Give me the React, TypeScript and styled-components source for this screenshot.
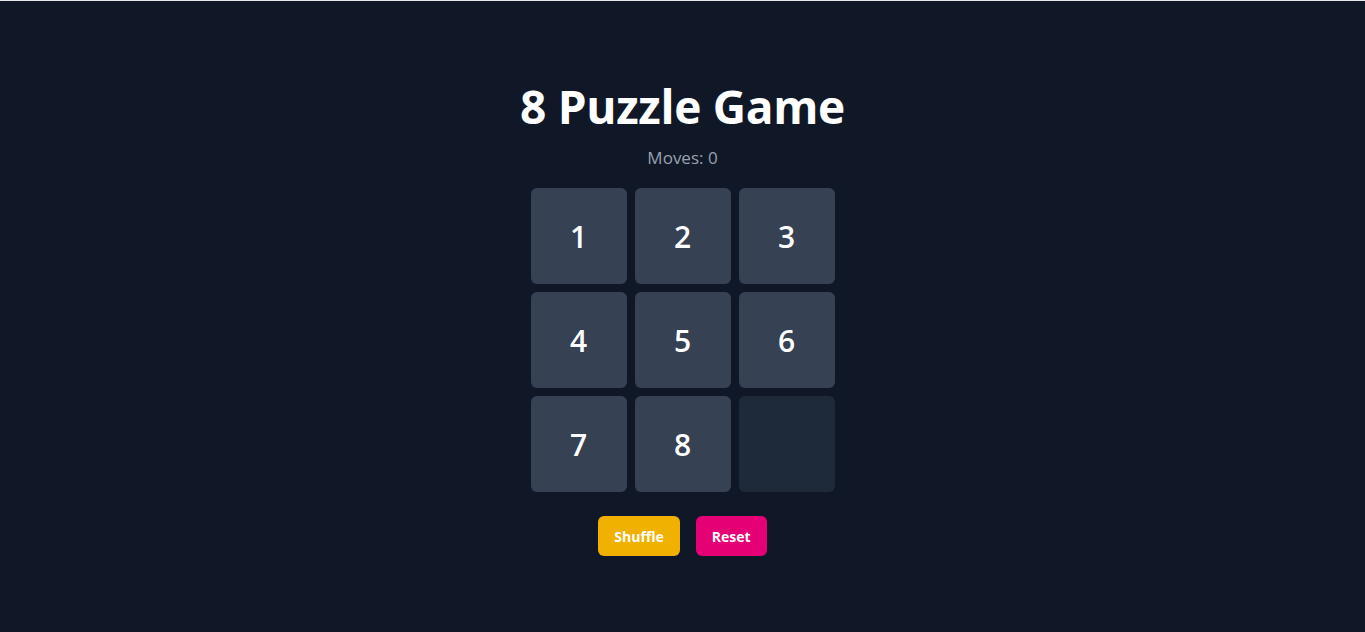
import styled, { createGlobalStyle } from 'styled-components';

const GlobalStyle = createGlobalStyle`
  html, body {
    margin: 0;
    padding: 0;
    background: #101828;
  }

  body {
    border-top: 1px solid #e5e7eb;
    font-family: 'Open Sans', 'Noto Sans', sans-serif;
    color: #ffffff;
  }
`;

const Page = styled.main`
  min-height: 631px;
  box-sizing: border-box;
  padding-top: 81px;
  display: flex;
  flex-direction: column;
  align-items: center;
`;

const Title = styled.h1`
  margin: 0 0 16px;
  font-size: 46px;
  line-height: 48px;
  font-weight: 700;
  letter-spacing: -0.3px;
`;

const Moves = styled.p`
  margin: 0 0 18px;
  font-size: 17px;
  line-height: 24px;
  color: #99a1af;
`;

const Board = styled.div`
  display: grid;
  grid-template-columns: repeat(3, 96px);
  grid-auto-rows: 96px;
  gap: 8px;
`;

const Tile = styled.button<{ $empty?: boolean }>`
  display: flex;
  align-items: center;
  justify-content: center;
  border: none;
  border-radius: 6px;
  padding: 0;
  background: ${({ $empty }) => ($empty ? '#1e2939' : '#364153')};
  color: #ffffff;
  font-family: inherit;
  font-size: 30px;
  font-weight: 600;
  cursor: ${({ $empty }) => ($empty ? 'default' : 'pointer')};
`;

const Actions = styled.div`
  display: flex;
  gap: 16px;
  margin-top: 24px;
`;

const ActionButton = styled.button<{ $color: string }>`
  height: 40px;
  padding: 0 16px;
  border: none;
  border-radius: 6px;
  background: ${({ $color }) => $color};
  color: #ffffff;
  font-family: inherit;
  font-size: 14px;
  font-weight: 700;
  cursor: pointer;
`;

const tiles = [1, 2, 3, 4, 5, 6, 7, 8, 0];

const App = () => {
  return (
    <>
      <GlobalStyle />
      <Page>
        <Title>8 Puzzle Game</Title>
        <Moves>Moves: 0</Moves>
        <Board>
          {tiles.map((n) => (
            <Tile key={n} $empty={n === 0}>
              {n !== 0 ? n : ''}
            </Tile>
          ))}
        </Board>
        <Actions>
          <ActionButton $color="#f0b100">Shuffle</ActionButton>
          <ActionButton $color="#e60076">Reset</ActionButton>
        </Actions>
      </Page>
    </>
  );
};

export default App;
